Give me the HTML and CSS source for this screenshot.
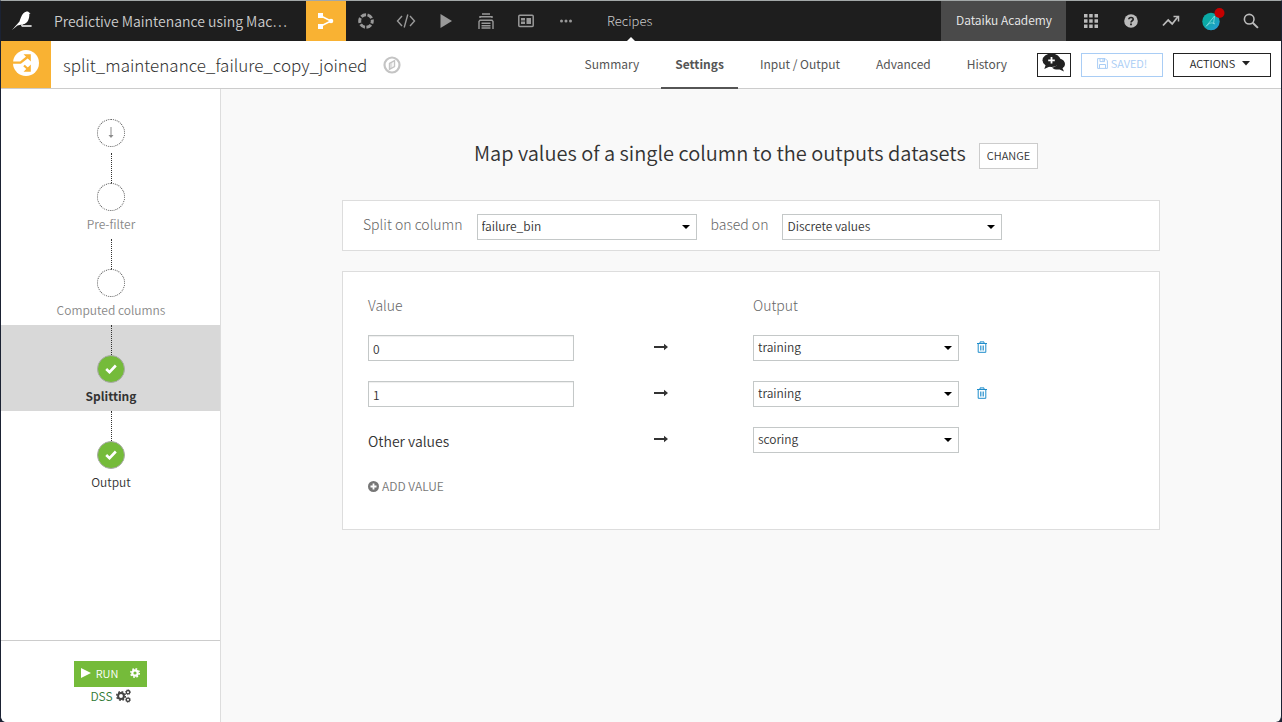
FILE: index.html
```html
<!DOCTYPE html>
<html lang="en">
<head>
<meta charset="utf-8">
<title>split_maintenance_failure_copy_joined</title>
<link rel="stylesheet" href="styles.css">
</head>
<body>
<div class="app">
  <header class="topbar">
    <a class="logo" href="#" aria-label="Home">
      <svg width="22" height="20" viewBox="0 0 22 20"><path d="M1 19 8.500 10.500C10 6 11.500 1.500 15 .7c1.600-.3 2.700.2 3.200 1l1.400.4-1.300.9c.3 4.700-1.500 8.600-4.800 10L10 13.700l-3.500.8z" fill="#fff"/><path d="m13.500 11-2.500 3.300h9.600v1.400h-9.800L10 14z" fill="#fff"/></svg>
    </a>
    <a class="project" href="#">Predictive Maintenance using Mac…</a>
    <nav class="icons" aria-label="Project">
      <a class="icon active" href="#" aria-label="Flow"><svg width="18" height="18" viewBox="0 0 18 18"><path d="M4 4l10 5-10 5" fill="none" stroke="#fff" stroke-width="1.500"/><path d="M1 1h5v5H1zM1 12h5v5H1z" fill="#fff"/><circle cx="14" cy="9" r="2.300" fill="#fff"/></svg></a>
      <a class="icon" href="#" aria-label="Lab"><svg width="18" height="18" viewBox="0 0 18 18"><circle cx="9" cy="9" r="6.300" fill="none" stroke="currentColor" stroke-width="3" stroke-dasharray="5.100 1.500" stroke-dashoffset="2.500"/></svg></a>
      <a class="icon" href="#" aria-label="Code"><svg width="20" height="16" viewBox="0 0 20 16" fill="none" stroke="currentColor" stroke-width="1.400"><path d="M6 3 1.500 8 6 13M14 3l4.500 5L14 13M11.800 1.500 8.200 14.500"/></svg></a>
      <a class="icon" href="#" aria-label="Jobs"><svg width="14" height="16" viewBox="0 0 14 16"><path d="M1.500 1v14L13 8z" fill="currentColor"/></svg></a>
      <a class="icon" href="#" aria-label="Deploy"><svg width="18" height="18" viewBox="0 0 18 18" fill="none" stroke="currentColor" stroke-width="1.400"><path d="M5 2h8M3 6V4.800h12V6M2 17V9.500l1-1.300h12l1 1.300V17M4.500 11.200h9M4.500 13.700h9M4.500 16h9"/></svg></a>
      <a class="icon" href="#" aria-label="Dashboards"><svg width="16" height="14" viewBox="0 0 16 14"><rect x=".8" y="1.300" width="14.400" height="11.200" rx="1" fill="none" stroke="currentColor" stroke-width="1.500"/><path d="M3 4h4v2.500H3zM3 7.500h4V10H3zM8.500 4h4.500v6H8.500z" fill="currentColor"/></svg></a>
      <a class="icon" href="#" aria-label="More"><svg width="14" height="4" viewBox="0 0 14 4" fill="currentColor"><circle cx="2.500" cy="2" r="1.500"/><circle cx="7" cy="2" r="1.500"/><circle cx="11.500" cy="2" r="1.500"/></svg></a>
    </nav>
    <a class="section" href="#">Recipes</a>
    <a class="academy" href="#">Dataiku Academy</a>
    <nav class="icons tools" aria-label="Tools">
      <a class="icon" href="#" aria-label="Applications"><svg width="14" height="14" viewBox="0 0 14 14" fill="currentColor"><path d="M0 0h3.500v3.500H0zM5.200 0h3.500v3.500H5.200zM10.500 0H14v3.500h-3.500zM0 5.200h3.500v3.500H0zM5.200 5.200h3.500v3.500H5.200zM10.500 5.200H14v3.500h-3.500zM0 10.500h3.500V14H0zM5.200 10.500h3.500V14H5.200zM10.500 10.500H14V14h-3.500z"/></svg></a>
      <a class="icon" href="#" aria-label="Help"><svg width="14" height="14" viewBox="0 0 14 14"><circle cx="7" cy="7" r="6.800" fill="currentColor"/><path d="M4.800 5.300C5 2.900 9.300 2.900 9.200 5.400 9.100 6.800 7 6.800 7 8.600" fill="none" stroke="#222" stroke-width="1.600"/><path d="M6.100 9.600h1.800v1.700H6.100z" fill="#222"/></svg></a>
      <a class="icon" href="#" aria-label="Activity"><svg width="18" height="12" viewBox="0 0 18 12" fill="none" stroke="currentColor" stroke-width="1.800"><path d="M1 10.500 6.200 5l4 4 5.500-7"/><path d="M11.500 1.500h5v5" stroke-width="1.500"/></svg></a>
      <a class="icon" href="#" aria-label="Profile"><svg width="28" height="28" viewBox="0 0 28 28"><defs><linearGradient id="avatar" x2="1" y2="1"><stop offset=".4" stop-color="#0aa9a5"/><stop offset="1" stop-color="#2d9be0"/></linearGradient></defs><circle cx="14" cy="14.500" r="8.700" fill="url(#avatar)"/><path d="M9 19.500 17.500 9l-1 8M10 18.500c2-2.500 5-3.500 8-1.500" fill="none" stroke="#7fdadd" stroke-width=".9"/><circle cx="22.500" cy="6" r="5" fill="#c40000"/></svg></a>
      <a class="icon" href="#" aria-label="Search"><svg width="16" height="16" viewBox="0 0 16 16" fill="none" stroke="currentColor"><circle cx="6.200" cy="6.200" r="4.800" stroke-width="1.600"/><path d="m9.700 9.700 5.200 5.200" stroke-width="2"/></svg></a>
    </nav>
  </header>

  <div class="titlebar">
    <div class="recipe-icon">
      <svg width="26" height="26" viewBox="0 0 26 26"><circle cx="13" cy="13" r="13" fill="#fff"/><path d="M0 12.700h7.500L14.500 7M11 15.500l4.500 4" fill="none" stroke="#f9b233" stroke-width="2.300"/><path d="M10.500 4.200h7.300v7.300zM17.800 14.500v7.300h-7.300z" fill="#f9b233"/></svg>
    </div>
    <h1>split_maintenance_failure_copy_joined</h1>
    <button class="compass" aria-label="Navigate"><svg width="18" height="18" viewBox="0 0 18 18"><circle cx="9" cy="9" r="7.500" fill="none" stroke="#c4c4c4" stroke-width="2.200"/><path d="M6.500 7.300 11.500 4.700v6l-5 2.600z" fill="none" stroke="#c4c4c4" stroke-width="1.400"/><path d="M6 7.300 9.300 5.800v6L6 13.500z" fill="#c4c4c4" opacity=".5"/></svg></button>
    <nav class="tabs" aria-label="Recipe">
      <a href="#">Summary</a>
      <a class="current" href="#">Settings</a>
      <a href="#">Input / Output</a>
      <a href="#">Advanced</a>
      <a href="#">History</a>
    </nav>
    <div class="actions">
      <button class="btn discuss" aria-label="Discussions"><svg width="24" height="20" viewBox="0 0 24 20"><path d="M17 5.500c4 .7 6 3 6 5.500 0 1.800-1 3.200-2.500 4.200l1.500 3.300-4.300-2.100c-3 .4-6-.1-7.700-2 4.500-.4 7.700-3.400 7-8.900z" fill="#222"/><ellipse cx="9.500" cy="7.300" rx="9" ry="6.800" fill="#222"/><path d="M4 11l-1.700 5 6.500-3z" fill="#222"/><path d="M9.500 4v6.600M6.200 7.300h6.600" stroke="#fff" stroke-width="1.800"/></svg></button>
      <button class="btn saved" disabled><svg width="11" height="11" viewBox="0 0 11 11" fill="none" stroke="currentColor"><path d="M.6.600h7.600l2.200 2.200v7.600H.600zM3 .6v3h4.500v-3M2.500 10.400V6.500h6v3.900M6 1v2"/></svg>SAVED!</button>
      <button class="btn menu">ACTIONS<svg width="8" height="5" viewBox="0 0 8 5"><path d="M0 0h8L4 4.600z" fill="currentColor"/></svg></button>
    </div>
  </div>

  <div class="body">
    <aside class="sidebar">
      <ol class="steps">
        <li class="step start"><span class="dot"><svg width="8" height="12" viewBox="0 0 8 12"><path d="M4 0v9" stroke="#8c8c8c"/><path d="M1.500 8h5L4 11z" fill="#8c8c8c"/></svg></span></li>
        <li class="step"><span class="line"></span><span class="dot"></span><a href="#">Pre-filter</a></li>
        <li class="step"><span class="line"></span><span class="dot"></span><a href="#">Computed columns</a></li>
        <li class="step done selected"><span class="line"></span><span class="dot"><svg width="12" height="10" viewBox="0 0 12 10"><path d="M1.200 5 4.500 8.200 10.800 1.500" fill="none" stroke="#fff" stroke-width="2.600"/></svg></span><a href="#">Splitting</a></li>
        <li class="step done"><span class="line"></span><span class="dot"><svg width="12" height="10" viewBox="0 0 12 10"><path d="M1.200 5 4.500 8.200 10.800 1.500" fill="none" stroke="#fff" stroke-width="2.600"/></svg></span><a href="#">Output</a></li>
      </ol>
      <div class="runner">
        <div class="run-group">
          <button class="run"><svg width="10" height="10" viewBox="0 0 10 10"><path d="M0 0v10l10-5z" fill="#fff"/></svg>RUN</button>
          <button class="run-options" aria-label="Run options"><svg width="10" height="10" viewBox="0 0 10 10"><circle cx="5" cy="5" r="2.700" fill="none" stroke="#fff" stroke-width="2.200"/><circle cx="5" cy="5" r="4.200" fill="none" stroke="#fff" stroke-width="1.600" stroke-dasharray="1.700 1.600"/></svg></button>
        </div>
        <a class="engine" href="#">DSS<svg width="15" height="14" viewBox="0 0 15 14" fill="none" stroke="#444"><circle cx="5" cy="7" r="2.900" stroke-width="2"/><circle cx="5" cy="7" r="4.300" stroke-width="1.500" stroke-dasharray="1.800 1.577"/><circle cx="12" cy="3.200" r="1.700" stroke-width="1.300"/><circle cx="12" cy="3.200" r="2.500" stroke-width=".8" stroke-dasharray="1 .963"/><circle cx="12" cy="10.800" r="1.700" stroke-width="1.300"/><circle cx="12" cy="10.800" r="2.500" stroke-width=".8" stroke-dasharray="1 .963"/></svg></a>
      </div>
    </aside>

    <main class="content">
      <div class="heading">
        <h2>Map values of a single column to the outputs datasets</h2>
        <button class="change">CHANGE</button>
      </div>
      <form class="panels">
        <section class="panel split">
          <label for="column">Split on column</label>
          <select id="column"><option>failure_bin</option></select>
          <label for="mode">based on</label>
          <select id="mode"><option>Discrete values</option></select>
        </section>
        <section class="panel mapping">
          <div class="row head"><span id="value-label">Value</span><span></span><span id="output-label">Output</span></div>
          <div class="row">
            <input type="text" value="0" aria-labelledby="value-label">
            <svg class="arrow" width="14" height="8" viewBox="0 0 14 8"><path d="M0 3h10V.8L14 4l-4 3.200V5H0z" fill="#333"/></svg>
            <select aria-labelledby="output-label"><option>training</option></select>
            <button class="trash" type="button" aria-label="Delete"><svg width="10" height="12" viewBox="0 0 10 12" fill="none" stroke="#1f8dcb"><path d="M0 2.500h10M3 2.300V.9h4v1.400M1.200 2.500v8.800h7.600V2.500"/><path d="M3.500 4.500v5M5 4.500v5M6.500 4.500v5" stroke-width=".8"/></svg></button>
          </div>
          <div class="row">
            <input type="text" value="1" aria-labelledby="value-label">
            <svg class="arrow" width="14" height="8" viewBox="0 0 14 8"><path d="M0 3h10V.8L14 4l-4 3.200V5H0z" fill="#333"/></svg>
            <select aria-labelledby="output-label"><option>training</option></select>
            <button class="trash" type="button" aria-label="Delete"><svg width="10" height="12" viewBox="0 0 10 12" fill="none" stroke="#1f8dcb"><path d="M0 2.500h10M3 2.300V.9h4v1.400M1.200 2.500v8.800h7.600V2.500"/><path d="M3.500 4.500v5M5 4.500v5M6.500 4.500v5" stroke-width=".8"/></svg></button>
          </div>
          <div class="row">
            <label class="other" for="other">Other values</label>
            <svg class="arrow" width="14" height="8" viewBox="0 0 14 8"><path d="M0 3h10V.8L14 4l-4 3.200V5H0z" fill="#333"/></svg>
            <select id="other"><option>scoring</option></select>
          </div>
          <button class="add" type="button"><svg width="11" height="11" viewBox="0 0 11 11"><circle cx="5.500" cy="5.500" r="5.500" fill="currentColor"/><path d="M5.500 2.500v6M2.500 5.500h6" stroke="#fff" stroke-width="1.800"/></svg>ADD VALUE</button>
        </section>
      </form>
    </main>
  </div>
</div>
</body>
</html>
```
FILE: styles.css
```css
* { box-sizing: border-box; }

body {
  margin: 0;
  background: #1b2233;
  color: #333;
  font-family: "Noto Sans CJK SC", "Open Sans", sans-serif;
  font-size: 12px;
  font-weight: 350;
  line-height: 18px;
}

a { color: inherit; text-decoration: none; }

button, input, select { font: inherit; color: inherit; margin: 0; border-radius: 0; }

button {
  display: inline-flex;
  align-items: center;
  justify-content: center;
  padding: 0;
  border: 0;
  background: none;
}

svg { display: block; flex: none; }

.app {
  display: flex;
  flex-direction: column;
  min-height: 100vh;
  border: solid #1b2233;
  border-width: 1px 1px 0;
  border-top-color: #a3a8a8;
  border-radius: 0 0 6px 6px;
  background: #f9f9f9;
  overflow: hidden;
}

.topbar {
  display: flex;
  height: 40px;
  align-items: stretch;
  background: #1e1e1e;
  color: #ccc;
  font-size: 14px;
  line-height: 40px;
}

.logo { display: flex; align-items: center; width: 53px; padding-left: 10px; }
.project { width: 252px; white-space: nowrap; }
.icons { display: flex; color: #999; }
.tools { color: #bbb; margin-right: 10px; }
.icon { display: flex; align-items: center; justify-content: center; width: 40px; }
.icon.active { background: #f9b233; }

.section { position: relative; margin-left: 21px; font-size: 13px; font-weight: 300; }
.section::after {
  content: "";
  position: absolute;
  bottom: 0;
  left: 50%;
  margin-left: -3px;
  border: 4px solid transparent;
  border-top: 0;
  border-bottom: 4px solid #fff;
}

.academy {
  margin-left: auto;
  margin-right: 5px;
  padding: 0 14px 0 15px;
  background: #4a4a4a;
  color: #eee;
  font-size: 12px;
  line-height: 38px;
}

.titlebar {
  display: flex;
  height: 48px;
  align-items: center;
  padding-right: 10px;
  border-bottom: 1px solid #ccc;
  background: #fff;
}

.recipe-icon {
  display: flex;
  align-self: stretch;
  justify-content: center;
  align-items: center;
  width: 50px;
  padding-bottom: 4px;
  background: #f9b233;
}

h1 { margin: 0 0 0 12px; font-size: 17px; line-height: 26px; font-weight: 300; }
.compass { margin-left: 16px; }

.tabs { display: flex; gap: 8px; margin-left: auto; align-self: stretch; font-weight: 400; line-height: 46px; color: #555; }
.tabs a { padding: 0 14px; }
.tabs .current { font-weight: 700; box-shadow: inset 0 -2px #555; height: 48px; }

.actions { display: flex; gap: 10px; margin-left: 16px; }
.btn { height: 24px; padding-bottom: 3px; border: 1px solid #222; background: #fff; font-size: 11px; color: #222; }
.discuss { width: 34px; }
.saved { width: 82px; gap: 3px; border-color: #a9cdf5; color: #a9cdf5; }
.menu { width: 98px; padding-right: 4px; gap: 7px; }

.body { display: flex; flex: 1; }

.sidebar {
  display: flex;
  flex-direction: column;
  width: 220px;
  border-right: 1px solid #ddd;
  background: #fff;
}

.steps { flex: 1; margin: 0; padding: 30px 0 0; list-style: none; }
.step { display: flex; flex-direction: column; align-items: center; height: 86px; padding-left: 1px; color: #888; }
.step.start { height: 34px; }
.line { height: 30px; border-left: 1px dotted #333; }
.dot {
  display: flex;
  align-items: center;
  justify-content: center;
  width: 28px;
  height: 28px;
  border: 1px dotted #555;
  border-radius: 50%;
}
.step a { margin-top: 4px; }
.done { color: #333; }
.done .dot { border: 1px solid #aaa; background: #75bb3a; }
.selected { background: #d8d8d8; font-weight: 700; }

.runner {
  display: flex;
  flex-direction: column;
  align-items: center;
  padding: 20px 0 17px;
  border-top: 1px solid #ccc;
}
.run-group { display: flex; height: 26px; background: #75bb3a; color: #fff; font-size: 11px; }
.run-group button { padding-bottom: 2px; }
.run { gap: 5px; padding-left: 7px; }
.run-options { padding: 0 7px 0 12px; }
.engine { display: flex; align-items: center; gap: 3px; color: #2f7a35; }

.content { flex: 1; padding: 48px 20px 20px; }

.heading { display: flex; justify-content: center; align-items: center; gap: 13px; margin-left: 10px; }
h2 { margin: 0; font-size: 20px; line-height: 32px; font-weight: 350; }
.change { height: 26px; margin-top: 6px; padding: 0 7px 2px; border: 1px solid #ccc; background: #fff; font-size: 11px; }

.panels { display: flex; flex-direction: column; gap: 20px; max-width: 818px; margin: 31px auto 0; }
.panel { border: 1px solid #ddd; background: #fff; }

.split { display: flex; align-items: center; gap: 14px; height: 51px; padding: 2px 20px 0; font-size: 14px; font-weight: 300; color: #666; }
.split select { width: 220px; }
.split label { padding-bottom: 5px; }

select, input {
  height: 26px;
  padding: 0 4px;
  border: 1px solid #c4c8c8;
  background: #fff;
  color: #333;
  font-size: 12px;
  font-weight: 350;
}
select {
  padding-bottom: 2px;
  appearance: none;
  background: #fff url("data:image/svg+xml,%3Csvg xmlns='http://www.w3.org/2000/svg' viewBox='0 0 8 4'%3E%3Cpath d='M0 0h8L4 4z'/%3E%3C/svg%3E") no-repeat right 6px center / 8px 4px;
}
input { box-shadow: inset 0 1px 1px #eee; }

.mapping { display: flex; flex-direction: column; gap: 20px; padding: 22px 25px 34px; }
.row { display: grid; grid-template-columns: 206px 179px 206px 1fr; align-items: center; height: 26px; }
.row.head { height: 21px; font-size: 14px; font-weight: 300; color: #666; }
.arrow { justify-self: center; margin: 0 6px 2px 0; }
.trash { justify-self: start; margin: 0 0 3px 18px; }
.other { padding-top: 2px; font-size: 14px; }
.add { align-self: flex-start; gap: 3px; margin-top: 4px; color: #777; }
```
